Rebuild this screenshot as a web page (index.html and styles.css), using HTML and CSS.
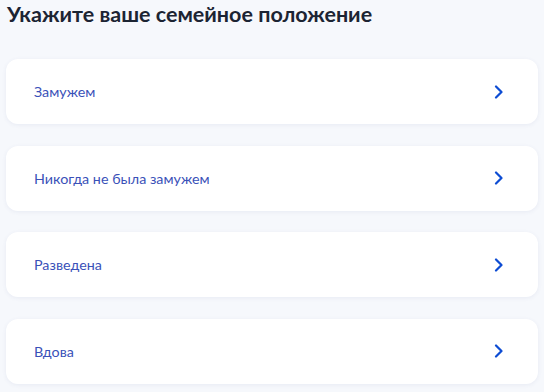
FILE: index.html
```html
<!DOCTYPE html>
<html>
<head>
    <title>Семейное положение</title>
    <link rel="stylesheet" href="styles.css">
</head>
<body>
    <div class="page">
        <h1>Укажите ваше семейное положение</h1>
        <div class="options">
            <a class="option" href="#">
                <span>Замужем</span>
                <svg class="chevron" viewBox="0 0 10 14" width="10" height="14"><path d="M2 1.5 L7.5 7 L2 12.5" fill="none" stroke="#0d4cd3" stroke-width="2.2" stroke-linecap="round" stroke-linejoin="round"/></svg>
            </a>
            <a class="option" href="#">
                <span>Никогда не была замужем</span>
                <svg class="chevron" viewBox="0 0 10 14" width="10" height="14"><path d="M2 1.5 L7.5 7 L2 12.5" fill="none" stroke="#0d4cd3" stroke-width="2.2" stroke-linecap="round" stroke-linejoin="round"/></svg>
            </a>
            <a class="option" href="#">
                <span>Разведена</span>
                <svg class="chevron" viewBox="0 0 10 14" width="10" height="14"><path d="M2 1.5 L7.5 7 L2 12.5" fill="none" stroke="#0d4cd3" stroke-width="2.2" stroke-linecap="round" stroke-linejoin="round"/></svg>
            </a>
            <a class="option" href="#">
                <span>Вдова</span>
                <svg class="chevron" viewBox="0 0 10 14" width="10" height="14"><path d="M2 1.5 L7.5 7 L2 12.5" fill="none" stroke="#0d4cd3" stroke-width="2.2" stroke-linecap="round" stroke-linejoin="round"/></svg>
            </a>
        </div>
    </div>
</body>
</html>
```

FILE: styles.css
```css
* {
    margin: 0;
    padding: 0;
    box-sizing: border-box;
}

body {
    font-family: Lato, "Noto Sans", sans-serif;
    background: #f6f8fc;
    width: 544px;
    height: 392px;
    overflow: hidden;
}

.page {
    padding: 1px 6px 0 6px;
}

h1 {
    font-size: 21.5px;
    font-weight: 700;
    color: #1c2433;
    line-height: 26px;
    padding-left: 1px;
    margin-bottom: 32px;
}

.options {
    display: flex;
    flex-direction: column;
    gap: 21.5px;
}

.option {
    display: flex;
    align-items: center;
    justify-content: space-between;
    height: 65px;
    padding: 0 34px 0 28px;
    background: #ffffff;
    border-radius: 12px;
    box-shadow: 0 1px 4px rgba(60, 80, 140, 0.08);
    text-decoration: none;
    color: #3a51b8;
    font-size: 14.3px;
}

.chevron {
    display: block;
}
```
